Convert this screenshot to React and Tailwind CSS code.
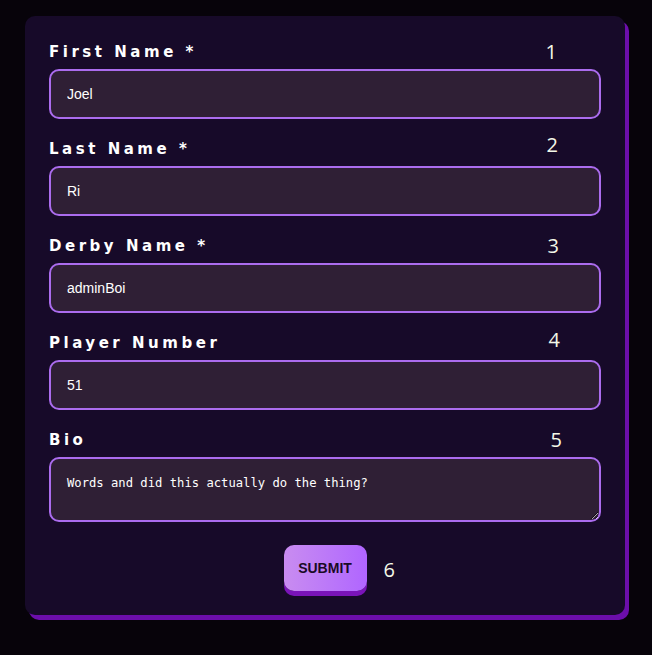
import { useState } from "react";

const fields = [
  { id: "first", label: "First Name *", value: "Joel", num: "1", numCls: "pr-[44px]" },
  { id: "last", label: "Last Name *", value: "Ri", num: "2", numCls: "pr-[43px] -translate-y-[4px]" },
  { id: "derby", label: "Derby Name *", value: "adminBoi", num: "3", numCls: "pr-[42px]" },
  { id: "number", label: "Player Number", value: "51", num: "4", numCls: "pr-[41px] -translate-y-[3px]" },
];

const labelCls =
  "font-['DejaVu_Sans',sans-serif] text-[15px] font-bold tracking-[0.235em] text-white";
const numBase = "font-['Open_Sans',sans-serif] text-[20px] font-normal text-[#f4f8e8]";

const ProfileForm = () => {
  const [values, setValues] = useState(
    Object.fromEntries(fields.map((f) => [f.id, f.value]))
  );
  const [bio, setBio] = useState("Words and did this actually do the thing?");

  return (
    <div className="min-h-[655px] bg-[#07030a] pt-4 pl-[25px] pr-[27px]">
      {/* Form card */}
      <form
        onSubmit={(e) => e.preventDefault()}
        className="w-[600px] rounded-[10px] bg-[#170a29] px-6 pt-[24px] pb-[24px] shadow-[4px_5px_0_#6c0eab]"
      >
        {fields.map((f) => (
          <div key={f.id} className="mb-[18px]">
            <div className="flex h-6 items-center justify-between">
              <label htmlFor={f.id} className={labelCls}>
                {f.label}
              </label>
              <span className={`${numBase} ${f.numCls}`}>{f.num}</span>
            </div>
            <input
              id={f.id}
              value={values[f.id]}
              onChange={(e) => setValues({ ...values, [f.id]: e.target.value })}
              className="mt-[5px] block h-[50px] w-full rounded-[10px] border-2 border-[#ab6cee] bg-[#2f1f35] px-4 font-['Liberation_Sans',Arial,sans-serif] text-[14px] text-white outline-none"
            />
          </div>
        ))}

        {/* Bio */}
        <div>
          <div className="flex h-6 items-center justify-between">
            <label htmlFor="bio" className={labelCls}>
              Bio
            </label>
            <span className={`${numBase} pr-[39px]`}>5</span>
          </div>
          <textarea
            id="bio"
            value={bio}
            onChange={(e) => setBio(e.target.value)}
            className="mt-[5px] block h-[65px] w-full rounded-[10px] border-2 border-[#ab6cee] bg-[#2f1f35] px-4 pt-[15px] font-['DejaVu_Sans_Mono',monospace] text-[12.2px] text-white outline-none"
          />
        </div>

        {/* Submit */}
        <div className="mt-[23px] flex justify-center">
          <div className="relative">
            <button
              type="submit"
              className="h-[46px] w-[83px] rounded-[10px] bg-gradient-to-r from-[#c98cf0] to-[#b065ff] font-['Liberation_Sans',Arial,sans-serif] text-[14px] font-bold text-[#1a0a26] shadow-[0_5px_0_#7a14b8]"
            >
              SUBMIT
            </button>
            <span className={`${numBase} absolute top-[10px] left-[100px]`}>6</span>
          </div>
        </div>
      </form>
    </div>
  );
};

export default function App() {
  return <ProfileForm />;
}
